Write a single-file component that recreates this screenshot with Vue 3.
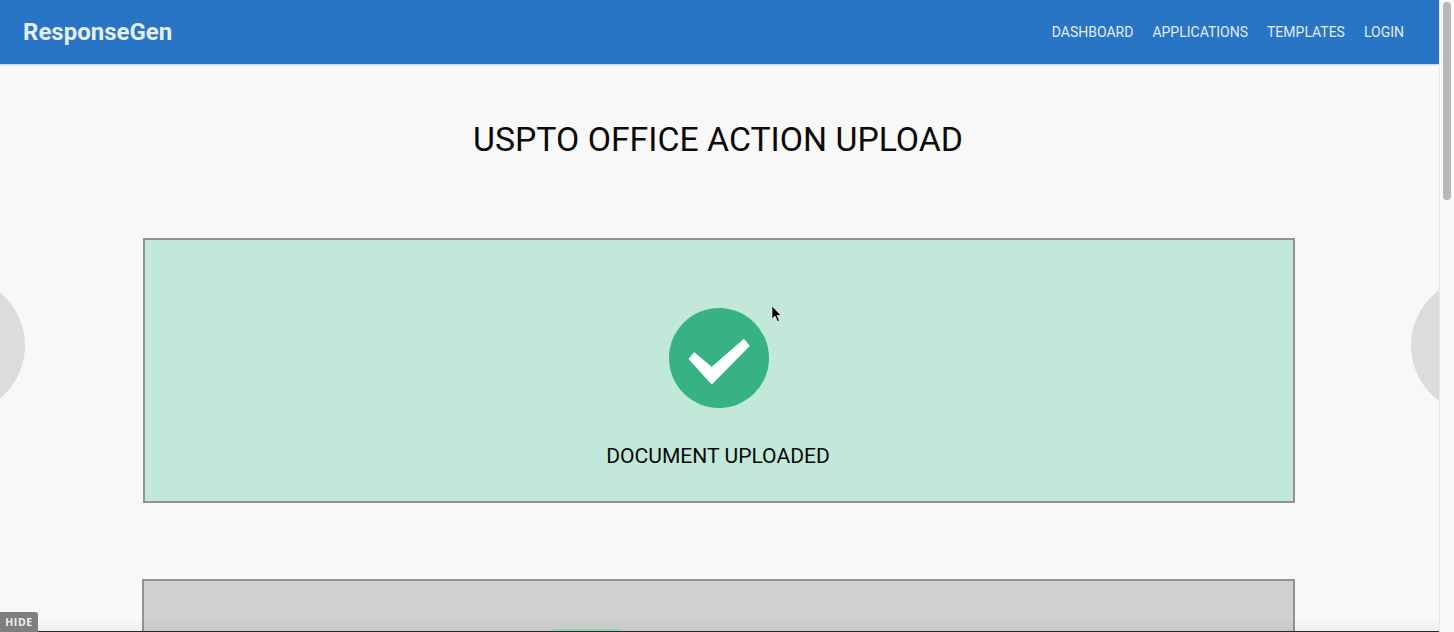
<script setup>
const links = ['DASHBOARD', 'APPLICATIONS', 'TEMPLATES', 'LOGIN']
</script>

<template>
  <div class="window">
    <div class="page">
      <header class="topbar">
        <div class="brand">ResponseGen</div>
        <nav class="nav">
          <a v-for="link in links" :key="link" class="nav-link">{{ link }}</a>
        </nav>
      </header>

      <main class="content">
        <h1 class="title">USPTO OFFICE ACTION UPLOAD</h1>

        <section class="panel success">
          <svg class="check" viewBox="0 0 100 100" width="100" height="100" aria-hidden="true">
            <circle cx="50" cy="50" r="50" fill="#36b283" />
            <path d="M20 51 L25.3 44.7 L42.7 59.3 L75 31.3 L80.3 38 L42.7 76 Z" fill="#fff" stroke="#fff" stroke-width="1" stroke-linejoin="round" />
          </svg>
          <div class="panel-label">DOCUMENT UPLOADED</div>
        </section>

        <section class="panel pending"></section>
      </main>

      <div class="arrow left"></div>
      <div class="arrow right"></div>
      <div class="fade"></div>
      <div class="hide">HIDE</div>
      <div class="progress"></div>
      <div class="baseline"></div>

      <svg class="cursor" viewBox="0 0 12 18" width="12" height="18" aria-hidden="true">
        <path d="M1 1 L1 14 L4 11 L6.5 16.5 L8.5 15.5 L6 10.5 L10 10.5 Z" fill="#000" stroke="#fff" stroke-width="0.6" />
      </svg>
    </div>

    <div class="scrollbar">
      <div class="thumb"></div>
    </div>
  </div>
</template>

<style>
html, body {
  margin: 0;
  overflow: hidden;
}
</style>

<style scoped>
.window {
  display: flex;
  width: 1454px;
  height: 632px;
  overflow: hidden;
  font-family: Roboto, "Liberation Sans", sans-serif;
  background: #f8f8f8;
}
.page {
  position: relative;
  flex: 1;
  min-width: 0;
  overflow: hidden;
}
.topbar {
  display: flex;
  align-items: center;
  justify-content: space-between;
  height: 64px;
  box-sizing: border-box;
  padding: 0 35px 1px 23px;
  background: #2874c5;
  box-shadow: 0 1px 2px rgba(0, 0, 0, 0.2);
}
.brand {
  font-size: 24px;
  font-weight: 700;
  color: #e6eef7;
}
.nav {
  display: flex;
  gap: 19px;
}
.nav-link {
  font-size: 14px;
  color: #e2ecf7;
}
.content {
  display: flex;
  flex-direction: column;
  align-items: center;
  padding-right: 1px;
}
.title {
  margin: 53px 2px 0 0;
  height: 45px;
  font-size: 33.8px;
  line-height: 46px;
  font-weight: 400;
  color: #0a0a0a;
}
.panel {
  box-sizing: border-box;
  width: 1152px;
  border: 2px solid #939393;
  flex-shrink: 0;
}
.success {
  display: flex;
  flex-direction: column;
  align-items: center;
  height: 265px;
  margin-top: 76px;
  padding-top: 68px;
  background: #c2e8d9;
}
.check {
  display: block;
}
.panel-label {
  margin: 36px 2px 0 0;
  font-size: 21.1px;
  line-height: 24px;
  color: #0a0a0a;
}
.pending {
  width: 1153px;
  height: 120px;
  margin: 76px 0 0 -1px;
  background: #d0d0d0;
}
.arrow {
  position: absolute;
  top: 277px;
  width: 137px;
  height: 137px;
  border-radius: 50%;
  background: #dcdcdc;
}
.arrow.left {
  left: -112px;
}
.arrow.right {
  right: -109px;
}
.fade {
  position: absolute;
  left: 0;
  right: 0;
  bottom: 1px;
  height: 12px;
  background: linear-gradient(rgba(0, 0, 0, 0), rgba(0, 0, 0, 0.04));
}
.hide {
  position: absolute;
  left: 0;
  bottom: 0;
  width: 38px;
  height: 20px;
  box-sizing: border-box;
  padding-top: 3px;
  text-align: center;
  border-top-right-radius: 3px;
  background: #7f7f7f;
  color: #f0f0f0;
  font-family: "Open Sans", "Liberation Sans", sans-serif;
  font-size: 10.5px;
  font-weight: 700;
  letter-spacing: 0.6px;
}
.progress {
  position: absolute;
  left: 553px;
  bottom: 1px;
  width: 66px;
  height: 2px;
  background: #8ad6b4;
}
.baseline {
  position: absolute;
  left: 38px;
  right: 0;
  bottom: 0;
  height: 1px;
  background: #2a2a2a;
}
.cursor {
  position: absolute;
  left: 771px;
  top: 305px;
}
.scrollbar {
  flex: 0 0 15px;
  box-sizing: border-box;
  padding: 2px 3px 0 3px;
  border-left: 1px solid #e8e8e8;
  background: #f9f9f9;
}
.thumb {
  height: 198px;
  border-radius: 4px;
  background: #b8b8b8;
}
</style>
